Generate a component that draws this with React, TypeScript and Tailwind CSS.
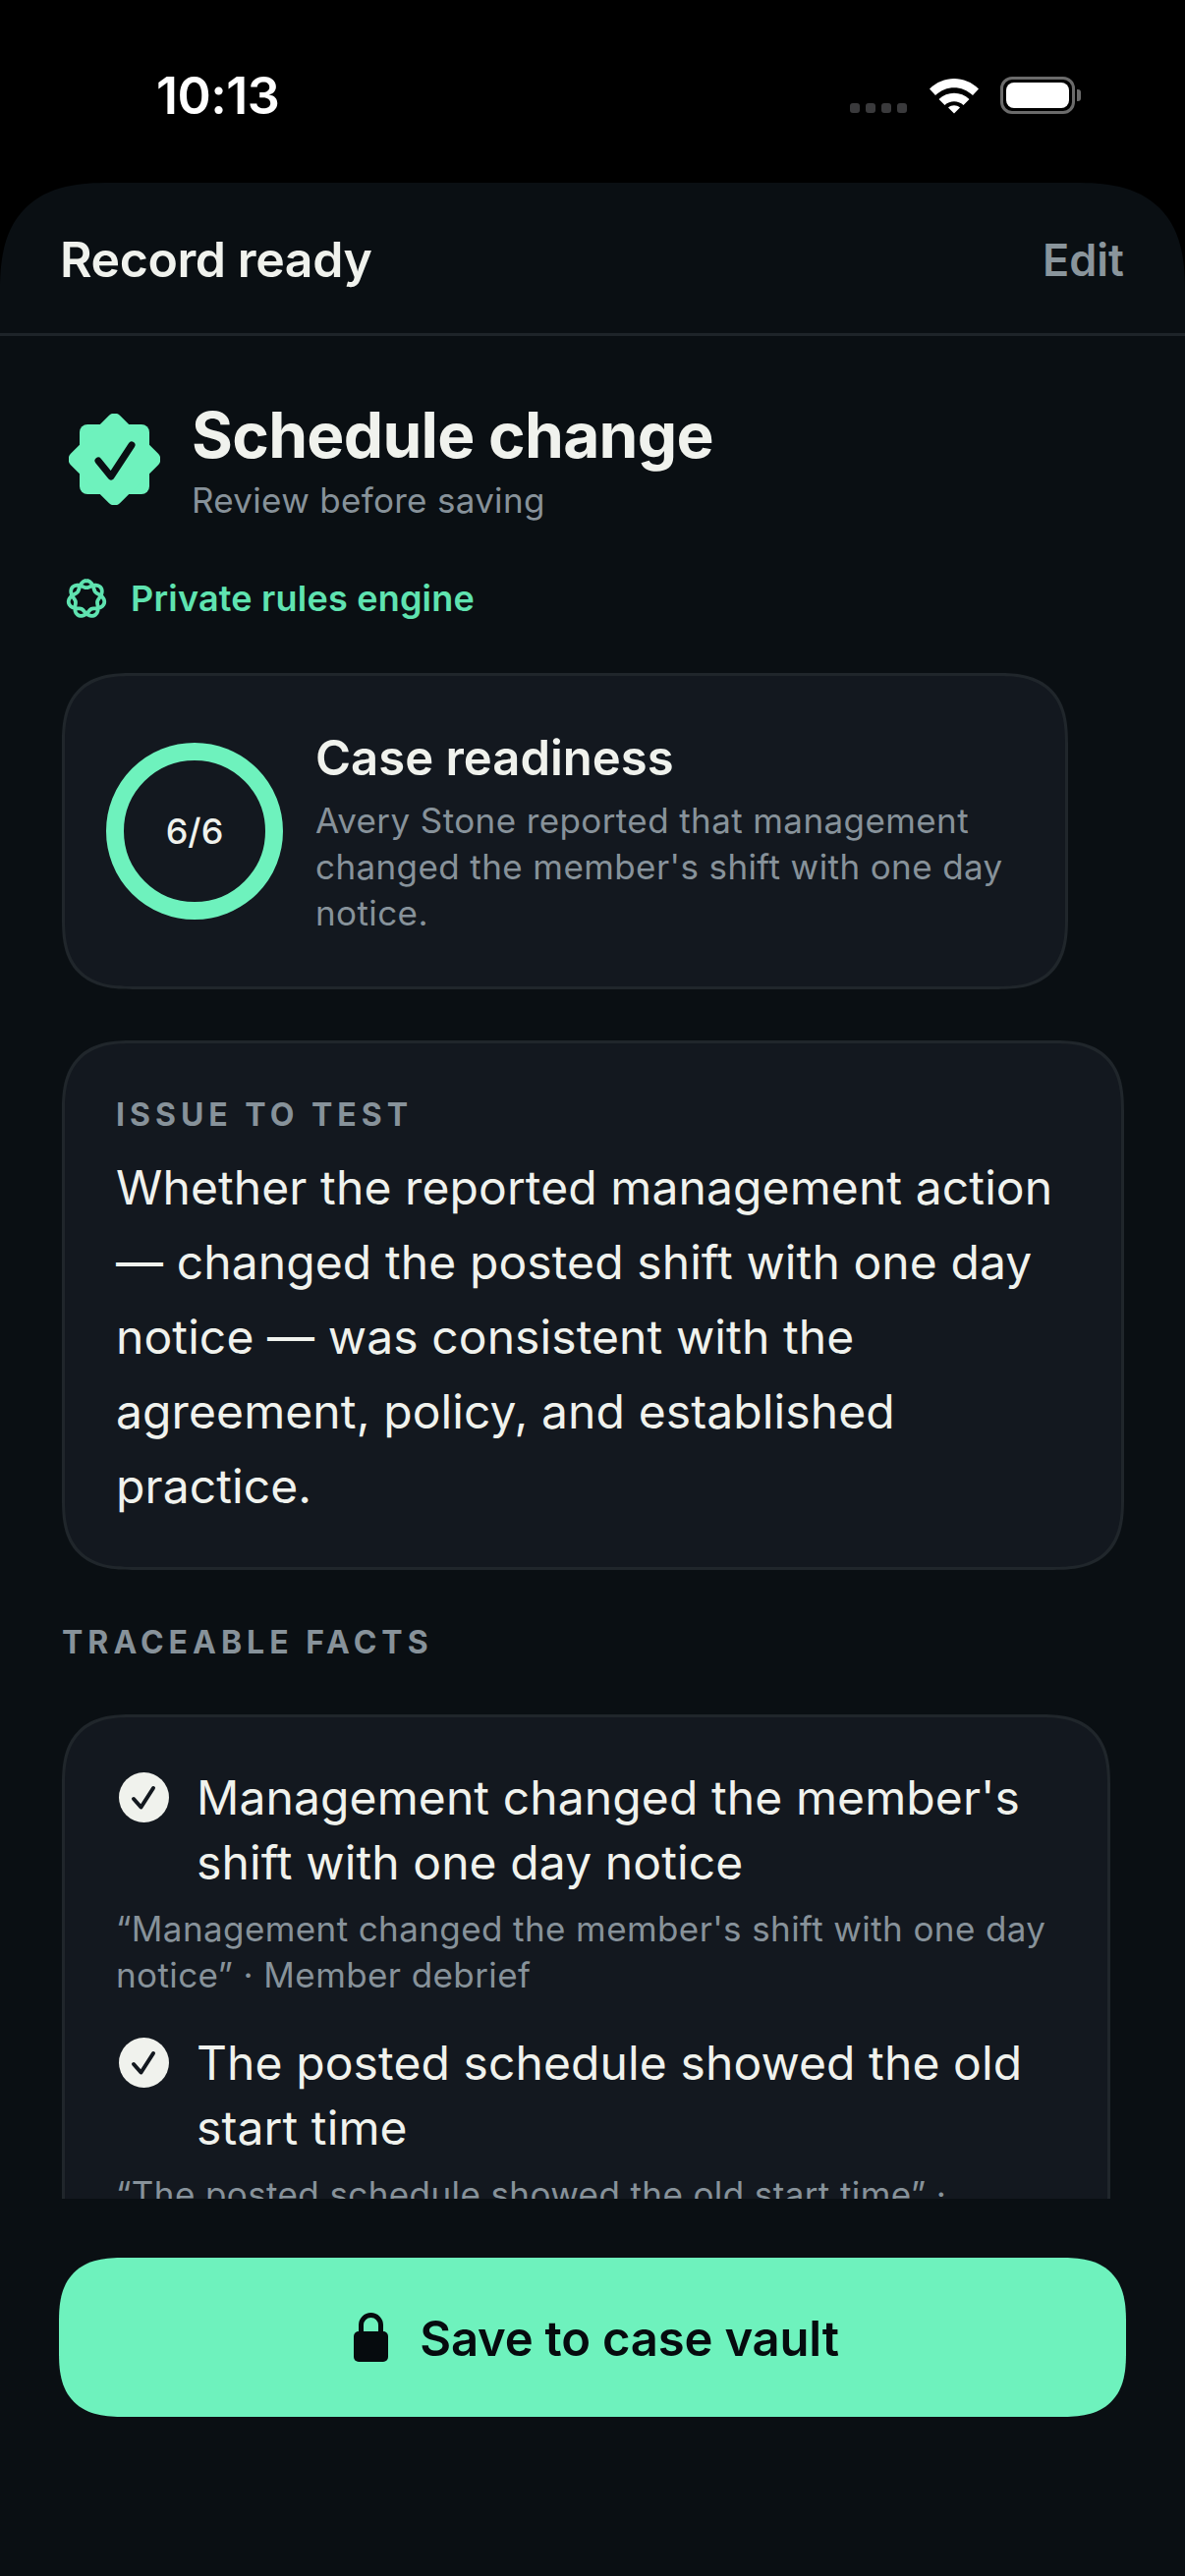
import type { ReactNode } from "react";

const facts = [
  {
    title: "Management changed the member's shift with one day notice",
    quote: "“Management changed the member's shift with one day notice” · Member debrief",
  },
  {
    title: "The posted schedule showed the old start time",
    quote: "“The posted schedule showed the old start time” · Posted schedule",
  },
];

// seven-lobed knot, one line going round twice
const knotPath = Array.from({ length: 141 }, (_, i) => {
  const t = (i / 140) * 4 * Math.PI;
  const r = 15 + 3.6 * Math.cos(3.5 * t);
  const x = 21 + r * Math.cos(t - Math.PI / 2);
  const y = 20.6 + r * Math.sin(t - Math.PI / 2);
  return `${i === 0 ? "M" : "L"}${x.toFixed(2)} ${y.toFixed(2)}`;
}).join(" ");

function StatusIcons() {
  return (
    <div className="flex items-center">
      <div className="mt-[26px] flex gap-[6px]">
        <span className="h-[10px] w-[10px] rounded-[3px] bg-[#3a3a3c]" />
        <span className="h-[10px] w-[10px] rounded-[3px] bg-[#3a3a3c]" />
        <span className="h-[10px] w-[10px] rounded-[3px] bg-[#3a3a3c]" />
        <span className="h-[10px] w-[10px] rounded-[3px] bg-[#3a3a3c]" />
      </div>
      <svg width="52" height="38" viewBox="0 0 52 38" className="ml-[22px]">
        <path d="M1 12.5C15 -1.5 37 -1.5 51 12.5L45 19C34 8.5 18 8.5 7 19Z" fill="#fff" />
        <path d="M10.5 23C19 14.5 33 14.5 41.5 23L35.5 29C30 24 22 24 16.5 29Z" fill="#fff" />
        <path d="M20 31.5C23.5 28.5 28.5 28.5 32 31.5L26 37.5Z" fill="#fff" />
      </svg>
      <div className="ml-[21px] flex h-[38px] w-[76px] items-center justify-center rounded-[12px] border-[3px] border-[#6b6b6b]">
        <div className="h-[26px] w-[64px] rounded-[8px] bg-white" />
      </div>
      <div className="ml-[2px] h-[12px] w-[4px] rounded-r-[3px] bg-[#6b6b6b]" />
    </div>
  );
}

function BadgeIcon() {
  return (
    <svg width="93" height="93" viewBox="0 0 93 93" className="shrink-0">
      <rect x="11" y="11" width="71" height="71" rx="8" fill="#6ef2bd" />
      <rect x="11" y="11" width="71" height="71" rx="8" fill="#6ef2bd" transform="rotate(45 46.5 46.5)" />
      <path d="M30 48L43 64L64 32" fill="none" stroke="#0a0f13" strokeWidth="7" strokeLinecap="round" strokeLinejoin="round" />
    </svg>
  );
}

function EngineIcon() {
  return (
    <svg width="42" height="40" viewBox="0 0 42 40" fill="none" stroke="#5fe3b0" strokeWidth="3.8" strokeLinejoin="round" className="shrink-0">
      <path d={knotPath} />
    </svg>
  );
}

function Card({ className, children }: { className: string; children: ReactNode }) {
  return (
    <div className={`rounded-[72px] border-[3px] border-[#20262b] bg-[#13181f] [corner-shape:superellipse(1.4)] ${className}`}>
      {children}
    </div>
  );
}

function FactCheck() {
  return (
    <svg width="51" height="51" viewBox="0 0 51 51" className="mt-[7px] shrink-0">
      <circle cx="25.5" cy="25.5" r="25.5" fill="#f0f2ed" />
      <path d="M15 27L22.5 35.5L35 16" fill="none" stroke="#13181f" strokeWidth="4" strokeLinecap="round" strokeLinejoin="round" />
    </svg>
  );
}

export default function App() {
  return (
    <div className="flex h-[2622px] w-[1206px] flex-col overflow-hidden bg-black font-['Inter',sans-serif]">
      {/* Status bar */}
      <div className="flex h-[186px] shrink-0 items-start justify-between pl-[159px] pr-[106px] pt-[66px]">
        <span className="text-[52px] font-semibold leading-[64px] tracking-[-0.5px] text-white">10:13</span>
        <div className="pt-[12px]">
          <StatusIcons />
        </div>
      </div>

      <div className="flex min-h-0 flex-1 flex-col rounded-t-[112px] bg-[#0a0f13] [corner-shape:superellipse(1.4)]">
        {/* Nav */}
        <div className="flex h-[156px] shrink-0 items-center justify-between border-b-[3px] border-[#1e2429] pl-[61px] pr-[62px] pt-[4px]">
          <span className="text-[50px] font-semibold tracking-[-0.4px] text-[#f0f2ed]">Record ready</span>
          <span className="text-[45px] font-semibold text-[#8a959c]">Edit</span>
        </div>

        <div className="min-h-0 flex-1 overflow-hidden pl-[63px] pr-[62px]">
          <div className="mt-[62px] flex items-center gap-[32px] pl-[7px]">
            <BadgeIcon />
            <div>
              <div className="text-[64px] font-bold leading-[78px] tracking-[-0.7px] text-[#f0f2ed]">Schedule change</div>
              <div className="mt-[5px] text-[35px] leading-[44px] tracking-[0.3px] text-[#87929a]">Review before saving</div>
            </div>
          </div>

          <div className="mt-[51px] flex items-center gap-[24px] pl-[4px]">
            <EngineIcon />
            <span className="text-[36px] font-[560] tracking-[0.2px] text-[#5fe3b0]">Private rules engine</span>
          </div>

          <Card className="mt-[49px] flex h-[322px] w-[1024px] items-center gap-[33px] pl-[42px] pr-[50px]">
            <div className="flex h-[180px] w-[180px] shrink-0 items-center justify-center rounded-full border-[18px] border-[#6ef2bd] text-[36px] font-medium text-[#f0f2ed]">
              6/6
            </div>
            <div className="mt-[2px]">
              <div className="text-[49px] font-semibold leading-[60px] text-[#f0f2ed]">Case readiness</div>
              <div className="mt-[10px] text-[35px] leading-[47px] tracking-[0.4px] text-[#87929a]">
                Avery Stone reported that management changed the member's shift with one day notice.
              </div>
            </div>
          </Card>

          <Card className="mt-[52px] h-[539px] w-[1081px] pl-[52px] pr-[50px] pt-[53px]">
            <div className="text-[32px] font-bold leading-[40px] tracking-[5px] text-[#87929a]">ISSUE TO TEST</div>
            <div className="mt-[16px] text-[48px] leading-[76px] tracking-[0.1px] text-[#f0f2ed]">
              Whether the reported management action — changed the posted shift with one day notice — was consistent with the agreement, policy, and established practice.
            </div>
          </Card>

          <div className="mt-[54px] text-[32px] font-bold leading-[40px] tracking-[5px] text-[#87929a]">TRACEABLE FACTS</div>

          <Card className="mt-[53px] w-[1067px] pl-[52px] pr-[53px] pt-[49px]">
            {facts.map((fact) => (
              <div key={fact.title} className="mb-[33px]">
                <div className="flex gap-[28px] pl-[3px]">
                  <FactCheck />
                  <div className="text-[48px] leading-[66px] tracking-[0.1px] text-[#f0f2ed]">{fact.title}</div>
                </div>
                <div className="mt-[11px] text-[35px] leading-[47px] tracking-[0.4px] text-[#87929a]">{fact.quote}</div>
              </div>
            ))}
          </Card>
        </div>

        {/* Save */}
        <div className="h-[384px] shrink-0 px-[60px] pt-[60px]">
          <button
            type="button"
            className="flex h-[162px] w-full items-center justify-center gap-[32px] rounded-[66px] bg-[#6ef2bd] pl-[8px] text-[49px] font-semibold tracking-[-0.2px] text-[#060b0e] [corner-shape:superellipse(1.4)]"
          >
            <svg width="35" height="50" viewBox="0 0 35 50">
              <path d="M7.5 22V12.5A10 10 0 0 1 27.5 12.5V22" fill="none" stroke="#060b0e" strokeWidth="5" />
              <rect x="0" y="19" width="35" height="31" rx="5" fill="#060b0e" />
            </svg>
            <span className="pt-[3px]">Save to case vault</span>
          </button>
        </div>
      </div>
    </div>
  );
}
